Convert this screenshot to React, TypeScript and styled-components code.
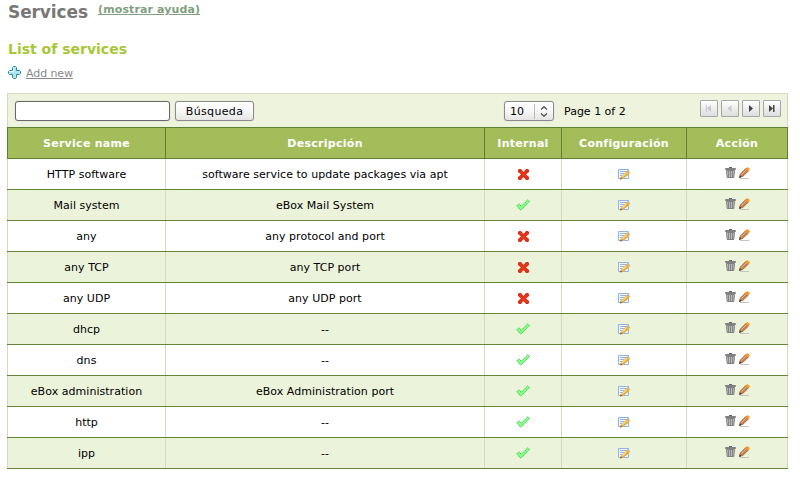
import React from "react";
import styled, { createGlobalStyle, css } from "styled-components";

const GlobalStyle = createGlobalStyle`
  * { box-sizing: border-box; }
  body {
    margin: 0;
    background: #fff;
    color: #000;
    font: 11px "DejaVu Sans", sans-serif;
    overflow: hidden;
  }
`;

const Page = styled.main`
  width: 800px;
  height: 477px;
  padding: 0 12px 0 7px;
`;

const TitleBar = styled.header`
  display: flex;
  align-items: flex-start;
  height: 39px;
  padding-left: 1px;
`;

const Title = styled.h1`
  margin: 2px 0 0;
  width: 90px;
  font-size: 17px;
  line-height: 20px;
  letter-spacing: -0.1px;
  color: #777;
  white-space: nowrap;
`;

const HelpLink = styled.a`
  margin-top: 3px;
  font-weight: bold;
  line-height: 14px;
  letter-spacing: 0.12px;
  color: #7f9f7f;
  text-decoration: underline;
  white-space: nowrap;
`;

const Subtitle = styled.h2`
  margin: 0;
  padding-left: 1px;
  height: 26px;
  font-size: 14px;
  font-weight: bold;
  line-height: 20px;
  color: #a6c837;
`;

const AddLink = styled.a`
  display: flex;
  align-items: flex-start;
  gap: 5px;
  height: 28px;
  padding-left: 1px;
  line-height: 18px;
  letter-spacing: -0.08px;
  color: #888;

  svg { margin-top: 1px; }
  span { text-decoration: underline; }
`;

const Toolbar = styled.div`
  display: flex;
  align-items: flex-start;
  width: 781px;
  height: 34px;
  padding: 7px 5px 0 7px;
  background: #eef3dd;
  border: 1px solid #d5d9c0;
  border-bottom: 0;
`;

const control = css`
  height: 20px;
  border: 1px solid #8b8b8b;
  border-radius: 3px;
  font: 11px "DejaVu Sans", sans-serif;
  color: #000;
`;

const SearchInput = styled.input`
  ${control}
  width: 155px;
  border-color: #686868;
  background: #fff;
  box-shadow: 0 0 1px #aaa;
  outline: none;
`;

const SearchButton = styled.button`
  ${control}
  width: 79px;
  margin-left: 5px;
  padding: 0;
  letter-spacing: 0.35px;
  background: linear-gradient(#fff, #f7f7f7 50%, #e6e5e4);
  box-shadow: 0 0 1px #aaa;
`;

const PageSize = styled.div`
  ${control}
  display: flex;
  align-items: center;
  width: 50px;
  margin-left: 250px;
  padding-left: 5px;
  background: linear-gradient(#fff, #f7f7f7 50%, #e6e5e4);
  box-shadow: 0 0 1px #aaa;
`;

const SizeValue = styled.span`
  width: 25px;
  height: 15px;
  line-height: 15px;
  border-right: 1px solid #bbb;
`;

const PageInfo = styled.span`
  width: 146px;
  padding-left: 10px;
  line-height: 21px;
  white-space: nowrap;
`;

const Pager = styled.nav`
  display: flex;
  gap: 3px;
  margin-top: -1px;
`;

const PagerButton = styled.button`
  display: flex;
  align-items: center;
  justify-content: center;
  width: 18px;
  height: 17px;
  padding: 0;
  color: #444;
  background: linear-gradient(#fff, #ddd);
  border: 1px solid #a6a6a6;
  border-radius: 1px;

  &:disabled { color: #c8c8c8; }
`;

const Grid = styled.div`
  display: grid;
  grid-template-columns: 158px 319px 77px 125px 102px;
  width: 781px;
`;

const HeadCell = styled.div`
  height: 32px;
  font-weight: bold;
  line-height: 31px;
  letter-spacing: 0.28px;
  text-align: center;
  color: #fff;
  background: #a4bd5b;
  border: 1px solid #5f8031;
  border-right-width: 0;

  &:last-child { border-right-width: 1px; }
`;

const HeadRow = styled.div`
  display: contents;
`;

const Row = styled.div<{ $shaded: boolean }>`
  display: contents;
  --row: ${(p) => (p.$shaded ? "#ebf3da" : "#fff")};
`;

const Cell = styled.div<{ $actions?: boolean }>`
  display: flex;
  align-items: center;
  justify-content: center;
  gap: 3px;
  height: 31px;
  padding-left: 1px;
  padding-bottom: ${(p) => (p.$actions ? "3px" : "0")};
  letter-spacing: 0.04px;
  white-space: nowrap;
  background:
    linear-gradient(#d5d9c0, #d5d9c0) left / 1px 100% no-repeat,
    var(--row);
  border-bottom: 1px solid #668537;

  &:last-child {
    background:
      linear-gradient(#d5d9c0, #d5d9c0) left / 1px 100% no-repeat,
      linear-gradient(#d5d9c0, #d5d9c0) right / 1px 100% no-repeat,
      var(--row);
  }
`;

const Icon = styled.svg`
  display: block;
  flex: none;
`;

const PlusIcon = () => (
  <Icon width="13" height="13" viewBox="0 0 13 13">
    <path d="M4.5 1.5l1-1h2l1 1v3h3l1 1v2l-1 1h-3v3l-1 1h-2l-1-1v-3h-3l-1-1v-2l1-1h3z" fill="#b0e4f0" stroke="#278ba5" />
    <path d="M5.5 5.5v-4M1.5 5.5h4" stroke="#eefcff" />
  </Icon>
);

const CrossIcon = () => (
  <Icon width="11" height="11" viewBox="0 0 11 11">
    <path d="M1 0h2l2.5 3L8 0h2l1 1v2L8 5.5 11 8v2l-1 1H8L5.5 8 3 11H1l-1-1V8l3-2.5L0 3V1z" fill="#d92f18" />
    <path d="m2 2 7 7m0-7L2 9" stroke="#ec3a1c" strokeWidth="1.2" />
  </Icon>
);

const CheckIcon = () => (
  <Icon width="14" height="12" viewBox="0 0 14 12">
    <path d="m.8 6.8 2-2L5.3 7.3 11.8.8l1.6 1.7-8.6 8.7z" fill="#90fb90" stroke="#2fdc40" strokeDasharray="1.7 .4" />
  </Icon>
);

const EditNoteIcon = () => (
  <Icon width="12" height="12" viewBox="0 0 12 12">
    <path d="M.5 1.5h10v9H.5z" fill="#f2f7ff" stroke="#8fb4ea" />
    <path d="M2 3.5h7M2 5.5h5M2 7.5h3" stroke="#94b7e7" />
    <path d="M2.7 9.2 8 3.6l1.8-1.4L12 4l-1.2 2.5L5.4 10.7l-2.9.8z" fill="#e2ad4a" />
    <path d="m4.3 8.7 4.4-4.2" stroke="#ffdc70" strokeWidth="1.4" />
    <path d="m9 3.2 2.3 1.8" stroke="#e0ae88" strokeWidth="2" />
    <path d="m2.5 9.6 1.8 1.2-2 .7z" fill="#705039" />
  </Icon>
);

const TrashIcon = () => (
  <Icon width="11" height="11" viewBox="0 0 11 11">
    <path d="M4 .5h3" stroke="#666" />
    <path d="M.5 1.5h10v1H.5z" fill="#aaa" stroke="#808080" />
    <path d="M1.5 3.5h8l-.7 7H2.2z" fill="#bcbcbc" stroke="#808080" />
    <path d="M3.5 4v6M5.5 4v6M7.5 4v6" stroke="#858585" />
  </Icon>
);

const PencilIcon = () => (
  <Icon width="11" height="12" viewBox="0 0 11 12">
    <path d="M1 11.5h9" stroke="#c5c5c5" />
    <path d="M.6 10.3 1.3 7 7 1.3l2.6 2.6-5.8 5.5z" fill="#c98350" stroke="#925d38" strokeWidth=".7" />
    <path d="m2.3 7.7 5-5" stroke="#e6b58b" />
    <path d="M6.3 2 8.5 0 11 2.3 9 4.6z" fill="#ff961e" />
    <path d="M0 11 .7 8.3 2.7 10z" fill="#54402f" />
  </Icon>
);

const SpinnerArrows = () => (
  <Icon width="18" height="13" viewBox="0 0 18 13">
    <path d="m6 4.5 3-2.7 3 2.7M6 8.5l3 2.7 3-2.7" fill="none" stroke="#444" strokeWidth="1.1" />
  </Icon>
);

const pagerShapes = [
  { label: "first", disabled: true, d: "M1 0h1v7H1zM6 0v7L2 3.5z" },
  { label: "previous", disabled: true, d: "M5.5 0v7L1.5 3.5z" },
  { label: "next", disabled: false, d: "M2 0v7l4-3.5z" },
  { label: "last", disabled: false, d: "M1 0v7l4-3.5zM5 0h1.5v7H5z" },
];

const services = [
  { name: "HTTP software", description: "software service to update packages via apt", internal: false },
  { name: "Mail system", description: "eBox Mail System", internal: true },
  { name: "any", description: "any protocol and port", internal: false },
  { name: "any TCP", description: "any TCP port", internal: false },
  { name: "any UDP", description: "any UDP port", internal: false },
  { name: "dhcp", description: "--", internal: true },
  { name: "dns", description: "--", internal: true },
  { name: "eBox administration", description: "eBox Administration port", internal: true },
  { name: "http", description: "--", internal: true },
  { name: "ipp", description: "--", internal: true },
];

const headings = ["Service name", "Descripción", "Internal", "Configuración", "Acción"];

export default function App() {
  return (
    <Page>
      <GlobalStyle />
      <TitleBar>
        <Title>Services</Title>
        <HelpLink>(mostrar ayuda)</HelpLink>
      </TitleBar>
      <Subtitle>List of services</Subtitle>
      <AddLink>
        <PlusIcon />
        <span>Add new</span>
      </AddLink>
      <Toolbar>
        <SearchInput />
        <SearchButton>Búsqueda</SearchButton>
        <PageSize>
          <SizeValue>10</SizeValue>
          <SpinnerArrows />
        </PageSize>
        <PageInfo>Page 1 of 2</PageInfo>
        <Pager>
          {pagerShapes.map((p) => (
            <PagerButton key={p.label} aria-label={p.label} disabled={p.disabled}>
              <Icon width="8" height="7" viewBox="0 0 8 7">
                <path d={p.d} fill="currentColor" />
              </Icon>
            </PagerButton>
          ))}
        </Pager>
      </Toolbar>
      <Grid>
        <HeadRow>
          {headings.map((h) => (
            <HeadCell key={h}>{h}</HeadCell>
          ))}
        </HeadRow>
        {services.map((s, i) => (
          <Row key={s.name} $shaded={i % 2 === 1}>
            <Cell>{s.name}</Cell>
            <Cell>{s.description}</Cell>
            <Cell>{s.internal ? <CheckIcon /> : <CrossIcon />}</Cell>
            <Cell><EditNoteIcon /></Cell>
            <Cell $actions>
              <TrashIcon />
              <PencilIcon />
            </Cell>
          </Row>
        ))}
      </Grid>
    </Page>
  );
}
